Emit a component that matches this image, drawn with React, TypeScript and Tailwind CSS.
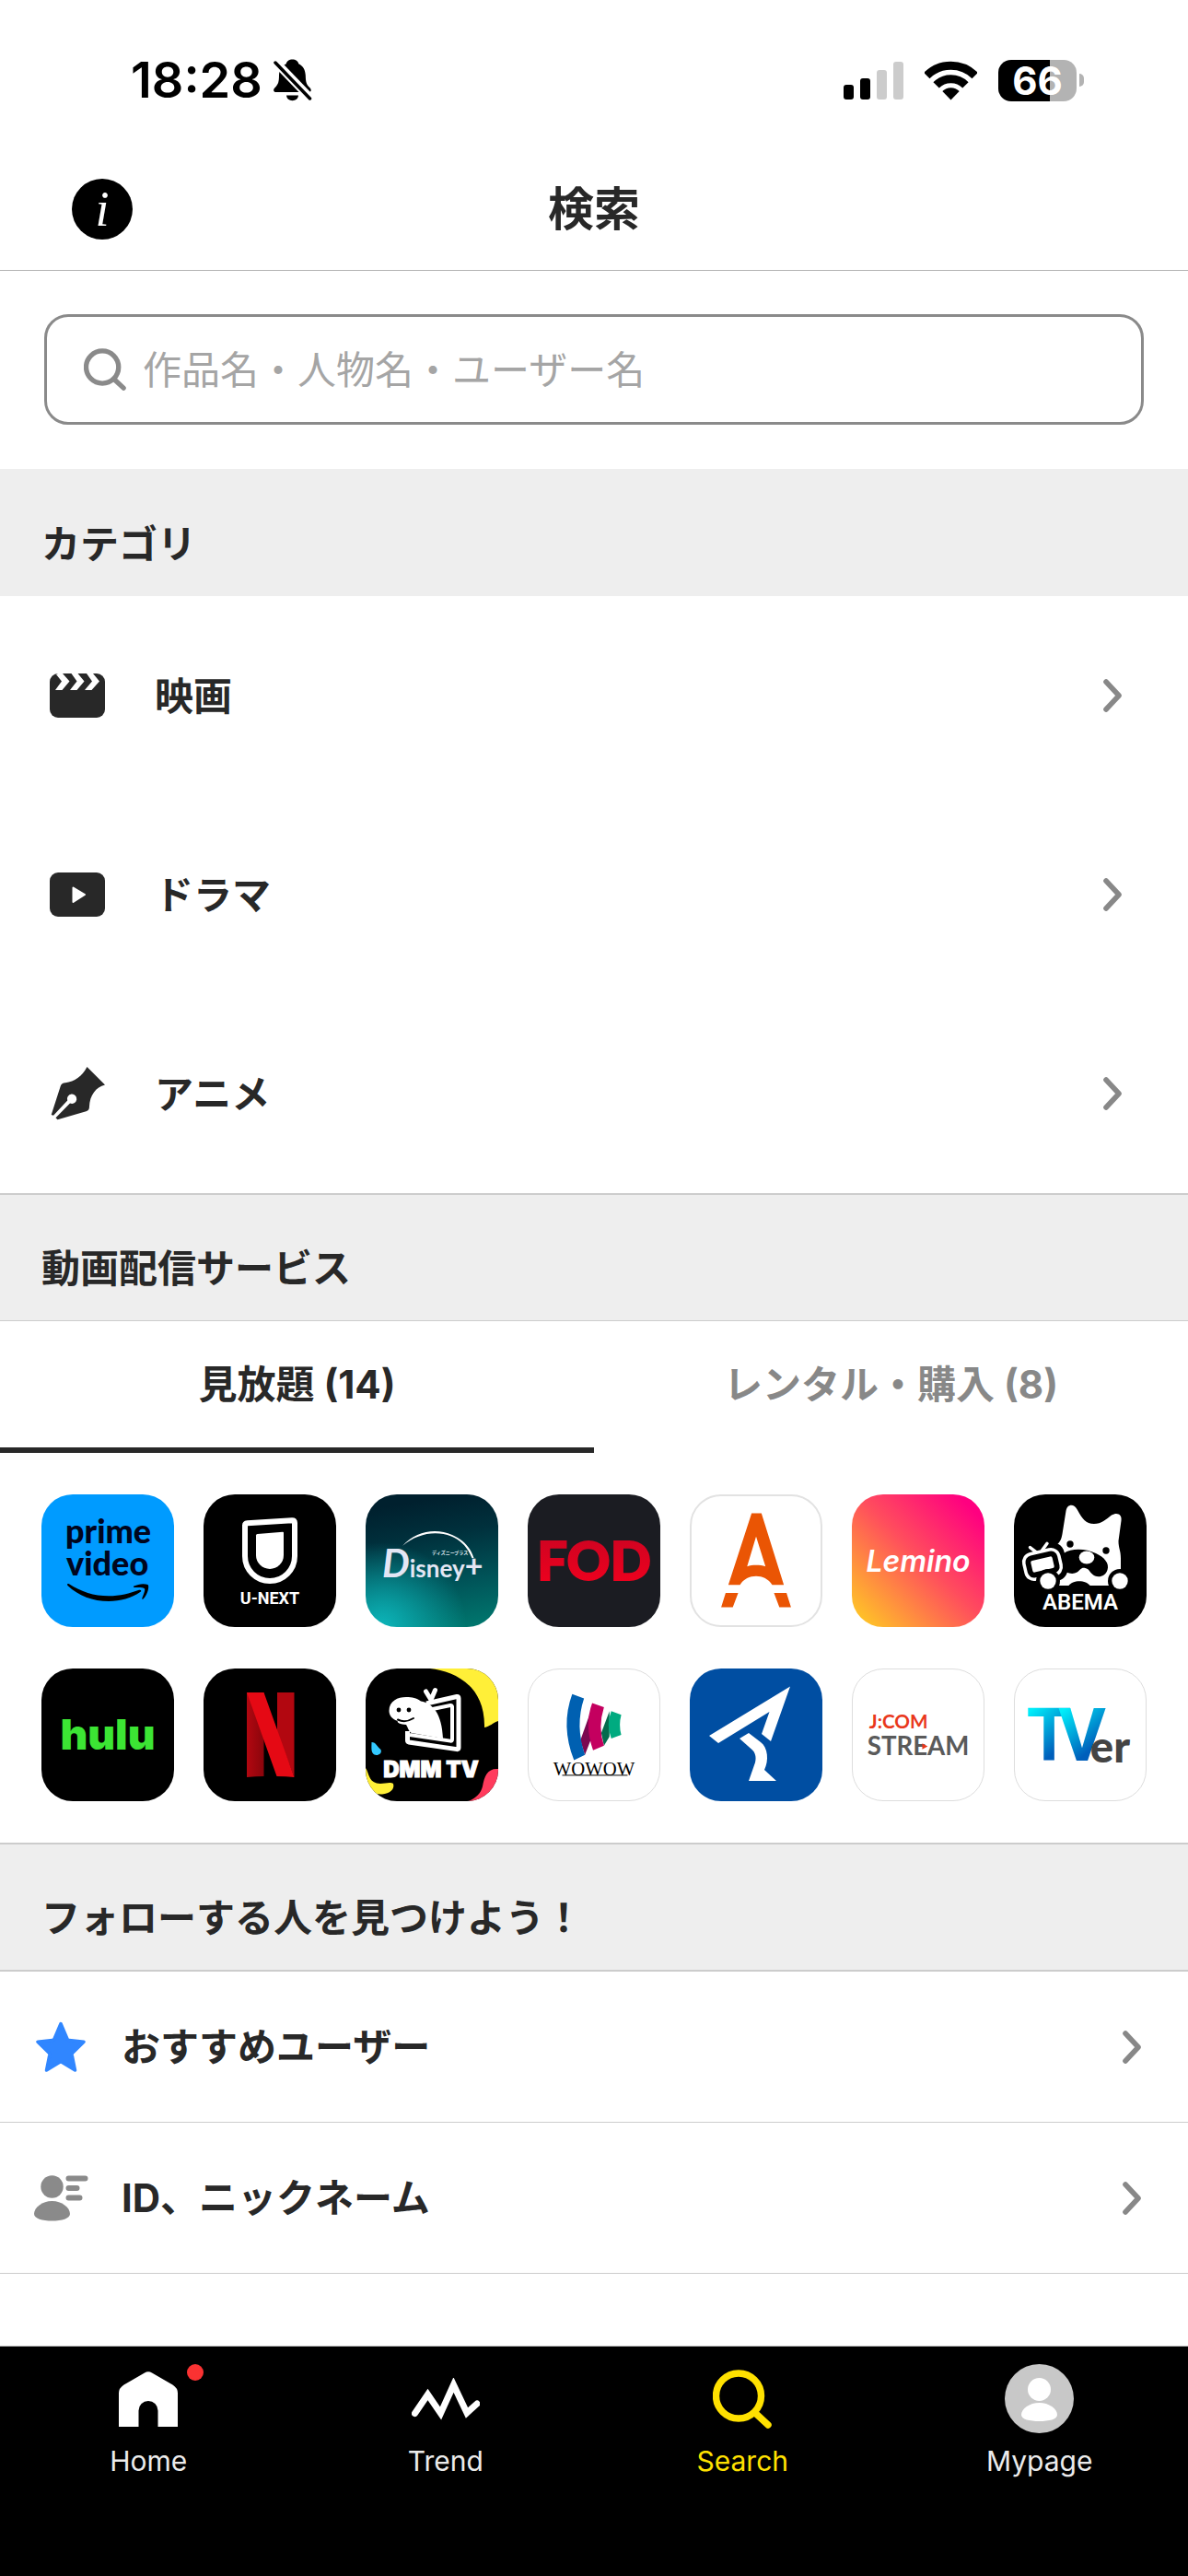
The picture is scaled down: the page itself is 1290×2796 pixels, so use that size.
import { useState } from "react";
import type { ReactNode } from "react";

interface RowProps {
  icon: ReactNode;
  label: string;
}

interface Service {
  name: string;
  tile: string;
  art: ReactNode;
}

function SearchIcon({ className }: { className: string }) {
  return (
    <svg viewBox="0 0 64 64" className={className} fill="none" stroke="currentColor">
      <circle cx="28" cy="28.5" r="24.5" strokeWidth="7.4" />
      <path d="M46 47l14 13" strokeWidth="7.4" strokeLinecap="round" />
    </svg>
  );
}

function Chevron() {
  return (
    <svg viewBox="0 0 22 36" className="h-9 w-[22px] shrink-0" fill="none" stroke="#888" strokeWidth="5.6">
      <path d="M4 3l14 15L4 33" strokeLinecap="round" strokeLinejoin="round" />
    </svg>
  );
}

function StatusBar() {
  return (
    <div className="flex h-[174px] items-center justify-between pr-[113px] pl-[142px] text-black">
      <div className="flex items-center gap-3">
        <span className="text-[54px] leading-[66px] font-semibold">18:28</span>
        <svg viewBox="0 0 42 46" className="h-[46px] w-[42px]">
          <path d="M20.500.5c3.500 0 6.200 2 6.800 4.700 5 2.300 7.300 7 7.500 12.800.2 7 .8 9.500 4.400 13 2.600 2.700 1.700 5-1.200 5H3c-3 0-4-2.400-1.300-5 3.600-3.700 4.200-6.200 4.300-13 .2-6 2.700-10.500 7.800-12.800C14.300 2.500 17 .5 20.500.5z" />
          <path d="M14 39.500h13c-.4 3.600-3 5.700-6.500 5.700S14.400 43.100 14 39.500z" />
          <path d="M2 3l38.500 40" stroke="#fff" strokeWidth="9" />
          <path d="M2 4l37.500 39" stroke="#000" strokeWidth="3.500" strokeLinecap="round" />
        </svg>
      </div>
      <div className="flex items-center gap-[23px]">
        <svg viewBox="0 0 65 42" className="h-[42px] w-[65px]">
          <rect y="26" width="11" height="16" rx="3" />
          <rect x="18" y="19" width="11" height="23" rx="3" />
          <rect x="36" y="10" width="11" height="32" rx="3" fill="#ccc" />
          <rect x="54" y="1" width="11" height="41" rx="3" fill="#ccc" />
        </svg>
        <svg viewBox="0 0 57 43" className="h-[43px] w-[57px]" fill="none" stroke="#000" strokeWidth="9">
          <path d="M2.300 16.100a37 37 0 0 1 52.400 0" />
          <path d="M12.600 26.400a22.500 22.500 0 0 1 31.800 0" />
          <path d="M28.500 42.500l-9.200-9.500a13 13 0 0 1 18.400 0z" fill="#000" stroke="none" />
        </svg>
        <div className="flex items-center gap-[3px]">
          <div className="flex h-[45px] w-[85px] items-center justify-center rounded-[14px] bg-[linear-gradient(90deg,#000_66%,#b3b3b3_66%)]">
            <span className="text-[42px] leading-[45px] font-bold text-white">66</span>
          </div>
          <div className="h-[14px] w-[5px] rounded-r-full bg-[#b3b3b3]" />
        </div>
      </div>
    </div>
  );
}

function SectionTitle({ children, line = "border-[#ccc]" }: { children: ReactNode; line?: string }) {
  return (
    <div className={`border-t-2 bg-[#eee] px-[45px] pt-12 pb-[25px] ${line}`}>
      <h2 className="text-[42px] leading-[63px] font-bold">{children}</h2>
    </div>
  );
}

function CategoryRow({ icon, label }: RowProps) {
  return (
    <a href="#" className="flex h-[216px] items-center pr-[71px] pl-[54px]">
      <span className="w-[60px]">{icon}</span>
      <span className="ml-[54px] grow text-[42px] leading-[63px] font-bold">{label}</span>
      <Chevron />
    </a>
  );
}

function FollowRow({ icon, label }: RowProps) {
  return (
    <a href="#" className="flex h-[164px] items-center border-b border-[#ccc] pr-[50px] pl-9">
      <span className="flex w-[60px] justify-center">{icon}</span>
      <span className="ml-9 grow text-[42px] leading-[63px] font-bold">{label}</span>
      <Chevron />
    </a>
  );
}

const categories: RowProps[] = [
  {
    label: "映画",
    icon: (
      <svg viewBox="0 0 60 48" className="h-12 w-[60px]">
        <rect width="60" height="48" rx="9" fill="#282828" />
        <path
          d="M7 1l6 7.500L6 18h7.500l8-9.500L14 0H9zM22 18h7.500l8-9.500L30.500 0h-7L29.500 8.500zM38 18h7.500l8.500-9.500L47 0h-7l6 8.500z"
          fill="#fff"
        />
      </svg>
    ),
  },
  {
    label: "ドラマ",
    icon: (
      <svg viewBox="0 0 60 48" className="h-12 w-[60px]">
        <rect width="60" height="48" rx="9" fill="#282828" />
        <path d="M25.500 16.500l12.500 7.500-12.500 8z" fill="#fff" stroke="#fff" strokeWidth="2" strokeLinejoin="round" />
      </svg>
    ),
  },
  {
    label: "アニメ",
    icon: (
      <svg viewBox="0 0 60 60" className="h-[60px] w-[60px]">
        <path
          d="M40.500 1L60 20.500C50 23 43.500 32 43 44c0 3-1 4.500-3.500 5.200L8.500 58.300l-2-2L22 40.500a5.200 5.200 0 1 0-2.800-3L4 53.700 1.700 53l10-31c1-2.700 2.300-3.600 5.300-3.800C27 17 35 11.500 40.500 1z"
          fill="#282828"
        />
      </svg>
    ),
  },
];

const services: Service[] = [
  {
    name: "prime video",
    tile: "bg-[#009bff]",
    art: (
      <>
        <g className="font-['Lato']" fontSize="36" fontWeight="900" fill="#00051d">
          <text x="26" y="53">prime</text>
          <text x="27" y="88">video</text>
        </g>
        <path d="M28 98c0-1 1-1.500 2-.7 13 8.500 27 13 43 13 12 0 23-2.700 33-6.500 2-.7 3 1 1.600 2-10 7-22 10.200-34.600 10.200-17 0-33-6-44.500-17z" />
        <path d="M100.500 101c-.8-.3-.7-1 0-1.400 4.500-2.500 11-3.200 15-1.600 1.800.8.400 10.500-5 15.500-.8.700-1.500.3-1.200-.7 1.500-3.800 3.500-8.800 2.800-10.300-1-1.800-6.800-1.700-11.600-1.500z" />
      </>
    ),
  },
  {
    name: "U-NEXT",
    tile: "bg-black",
    art: (
      <>
        <path d="M47.500 31.300L96 28.200q3-.2 3 2.800v36a27 27 0 0 1-54 0V34q0-2.500 2.500-2.700z" fill="none" stroke="#fff" strokeWidth="6" />
        <path d="M58.500 43L86 40.800q1 0 1 1V66a15 15 0 0 1-30 0V44.500q0-1.300 1.500-1.500z" fill="#fff" />
        <text x="72" y="119" textAnchor="middle" className="font-['Roboto']" fontSize="18" fontWeight="700" fill="#fff">U-NEXT</text>
      </>
    ),
  },
  {
    name: "Disney+",
    tile: "bg-[radial-gradient(circle_at_12%_100%,#0cb5ba_0%,transparent_48%),linear-gradient(170deg,#00202e_10%,#00313d_35%,#005358_66%,#007a70_100%)]",
    art: (
      <>
        <path d="M40 56C54 40 76 36 94 44c12 5 20 14 23.500 25l-2 .2C111 58 104 50 93 45.500 76 39 56 42.500 40 56z" fill="#fff" />
        <text x="72" y="65" className="font-['Noto_Sans_CJK_JP']" fontSize="5" fontWeight="700" fill="#dfe8f0">ディズニープラス</text>
        <text y="90" className="font-['Lato']" fontWeight="700" fill="#e4e6f4">
          <tspan x="18" fontSize="42" fontStyle="italic">D</tspan>
          <tspan fontSize="26">isney</tspan>
          <tspan fontSize="34">+</tspan>
        </text>
      </>
    ),
  },
  {
    name: "FOD",
    tile: "bg-[#1b1c22]",
    art: (
      <>
        <linearGradient id="fod" x2="0" y2="1">
          <stop stopColor="#c90422" />
          <stop offset="1" stopColor="#f2001d" />
        </linearGradient>
        <text x="72" y="93" textAnchor="middle" className="font-['Lato']" fontSize="58" fontWeight="900" fill="url(#fod)" stroke="url(#fod)" strokeWidth="2">FOD</text>
      </>
    ),
  },
  {
    name: "A",
    tile: "bg-white border-2 border-[#e2e2e2]",
    art: (
      <g fill="#ea5504">
        <path fillRule="evenodd" d="M67 19h11l25 80H90c-8-13-28-13-36 0H41zM72 45L62 78.500c6-2 14-2 20.500 0z" />
        <path d="M38 108h14l-6 16H33zM92 108h14l5 16H98z" />
      </g>
    ),
  },
  {
    name: "Lemino",
    tile: "bg-[linear-gradient(45deg,#ffc526_5%,#ff4d5d_52%,#ff0080_90%)]",
    art: (
      <text x="72" y="84" textAnchor="middle" className="font-['Inter']" fontSize="32" fontWeight="600" fontStyle="italic" fill="#fff">Lemino</text>
    ),
  },
  {
    name: "ABEMA",
    tile: "bg-black",
    art: (
      <>
        <path d="M45 99V56c5-4 6.500-7 7.500-13l4-25c1.500-8 9-8 12.500-1 5 9 9 15 18 15 8 0 13-5 19-9.500 6-3.500 11.500-1 10.500 6l-3 22c0 8 2.500 10 2.500 19v29.500z" fill="#fff" />
        <circle cx="61" cy="54" r="3.700" />
        <circle cx="100" cy="61" r="3.700" />
        <path d="M54 64c9-6 24-5 35 0 9 4 15 11 12.500 18-2.500 8-12 9.500-17 4-3-3-3-5-7-6-5-1-5 2-9 4.500-5 3-13 1-16.500-5z" />
        <ellipse cx="79" cy="68.500" rx="8.300" ry="7" fill="#fff" />
        <path d="M59 99.500c5-7 19-7 24 0z" />
        <g transform="rotate(-13 31 76)">
          <rect x="5" y="55" width="52" height="42" rx="13" />
          <rect x="11.500" y="62" width="39" height="28" rx="9" fill="none" stroke="#fff" strokeWidth="3.500" />
          <rect x="19" y="69.500" width="24" height="13" rx="2" fill="#fff" />
          <path d="M27 61l-5-6M34 61l7-6" stroke="#fff" strokeWidth="3.500" strokeLinecap="round" />
        </g>
        <circle cx="37" cy="94" r="13" />
        <circle cx="37" cy="94" r="8.700" fill="#fff" />
        <circle cx="115" cy="94" r="13" />
        <circle cx="115" cy="94" r="8.700" fill="#fff" />
        <text x="72" y="125" textAnchor="middle" className="font-['Roboto']" fontSize="24" fontWeight="600" fill="#fff">ABEMA</text>
      </>
    ),
  },
  {
    name: "hulu",
    tile: "bg-black",
    art: (
      <text x="72" y="88" textAnchor="middle" className="font-['Inter']" fontSize="46" fontWeight="900" fill="#3ce534">hulu</text>
    ),
  },
  {
    name: "Netflix",
    tile: "bg-black",
    art: (
      <>
        <linearGradient id="ribbon" x2="1" y2="0">
          <stop stopColor="#b20710" />
          <stop offset="1" stopColor="#8a050c" />
        </linearGradient>
        <path d="M47 26h18.500v91q-9 .2-18.500 1z" fill="url(#ribbon)" />
        <path d="M80 26h18.500v92L80 70z" fill="#b20710" />
        <path d="M47 26h18.500l33 92q-9-1-19-1z" fill="#e50914" />
      </>
    ),
  },
  {
    name: "DMM TV",
    tile: "bg-black",
    art: (
      <>
        <path d="M70 0c26 3 60 18 59 64 6-1 9-5 15-7V0z" fill="#ffef38" />
        <path d="M0 108c4 6 3 14 12 16.500 7 1.500 14-2 18 .5 2 6-4 11-12 11.500C10 137 5 133 0 130z" fill="#ffef38" />
        <path d="M112 144c8-4 13-8 15-16 2-12 6-20 17-19v35z" fill="#ff3b5c" />
        <path d="M6.500 80c5 0 6 5 10 8 2 5-4 7-7 5.500-4-2-3-8-3-13.500z" fill="#33c9ff" />
        <path d="M66 38l33-7.500q2-.5 2 2V86q0 2-2 1.600L47 80q-1.500-.5-1.500-2V68" fill="none" stroke="#fff" strokeWidth="5" />
        <path d="M68 45l24-5q2-.3 2 1.500V77q0 2-2 1.600L48 72" fill="none" stroke="#fff" strokeWidth="4" />
        <path d="M25.500 46C25.500 35 35 31 44 31c7 0 11 1 16 4.500C73 38 83 49 84 76l-34-6c-3-1-4-6-6-9-6 0-11-3-9-4-6-2-9.500-6-9.500-11z" fill="#fff" />
        <path d="M35 55.500c7 3.500 12 1.500 17-1.500" fill="none" stroke="#000" strokeWidth="2" strokeLinecap="round" />
        <circle cx="36" cy="45" r="2.400" />
        <circle cx="47" cy="45" r="2.400" />
        <path d="M71 34l-5.500-9M71 34l4.500-10.500" stroke="#fff" strokeWidth="5" strokeLinecap="round" />
        <text x="71" y="118" textAnchor="middle" className="font-['Inter']" fontSize="24" fontWeight="900" fill="#fff" stroke="#fff">DMM TV</text>
      </>
    ),
  },
  {
    name: "WOWOW",
    tile: "bg-white border border-[#ddd]",
    art: (
      <>
        <path d="M62 94l-5-16 10-28 2 26z" fill="#7b0850" />
        <path d="M83 84l-3-14 9-24v28z" fill="#046b4d" />
        <path d="M48 27l13 5q-10 30 1 62l-12 6q-15-38-2-73z" fill="#0060b1" />
        <path d="M70 37l13 4.500q-7 22 0 42.500l-12 5q-10-28-1-52z" fill="#c4005f" />
        <path d="M91 46l11 4q-3 11 0 22l-11 4q-6-15 0-30z" fill="#00ab80" />
        <text x="72" y="117" textAnchor="middle" className="font-['Liberation_Serif']" fontSize="21">WOWOW</text>
        <path d="M37 116.500h72" stroke="#000" />
      </>
    ),
  },
  {
    name: "SKY",
    tile: "bg-[#004ea2]",
    art: (
      <path
        d="M109 19.500L88 79l-10-8 8.500-24L31 81l-10-8zM64 70l13 10c8 6 9 20 4 30l13 12H64l7-20c1.500-6 0-11-3.500-14L54 76z"
        fill="#fff"
      />
    ),
  },
  {
    name: "J:COM STREAM",
    tile: "bg-white border border-[#ddd]",
    art: (
      <g className="font-['Lato']" fontWeight="700">
        <text x="18" y="65" fontSize="21" fill="#e9381c">J:COM</text>
        <text x="16" y="94" fontSize="28" fill="#5a5a5a">STREAM</text>
        <path d="M76.500 81.500l6 3.300-6 3.200z" fill="#e9381c" />
      </g>
    ),
  },
  {
    name: "TVer",
    tile: "bg-white border border-[#ddd]",
    art: (
      <>
        <linearGradient id="tver" x2=".5" y2="1">
          <stop offset=".2" stopColor="#00eefa" />
          <stop offset=".8" stopColor="#005fbb" />
        </linearGradient>
        <g className="font-['Roboto']" fontSize="80" fontWeight="700" fill="url(#tver)">
          <text x="13" y="100">T</text>
          <text x="48" y="100">V</text>
        </g>
        <text x="83" y="102" className="font-['Lato']" fontSize="48" fontWeight="900" fill="#444">er</text>
      </>
    ),
  },
];

const followRows: RowProps[] = [
  {
    label: "おすすめユーザー",
    icon: (
      <svg viewBox="0 0 54 55" className="h-[55px] w-[54px]">
        <path
          d="M27 2.500l7 16.500q.6 1.500 2.200 1.600L52 22.200 40 34q-1 1-.8 2.500L42.500 53 28.500 44.500q-1.500-.8-3 0L11.500 53l3.300-16.500Q15 35 14 34L2 22.200l15.800-1.600q1.600-.1 2.200-1.600z"
          fill="#3086ff"
          stroke="#3086ff"
          strokeWidth="3.500"
          strokeLinejoin="round"
        />
      </svg>
    ),
  },
  {
    label: "ID、ニックネーム",
    icon: (
      <svg viewBox="0 0 60 50" className="h-[50px] w-[60px]" fill="#8a8a8a">
        <circle cx="20.500" cy="12.500" r="12.200" />
        <path d="M20.500 28C31 28 40 35 40 42c0 5-9 7.500-19.500 7.500S1 47 1 42c0-7 9-14 19.500-14z" />
        <path d="M38.500 3.500h18M38.500 14h9M38.500 24.500h12" stroke="#8a8a8a" strokeWidth="6" strokeLinecap="round" />
      </svg>
    ),
  },
];

const navItems: RowProps[] = [
  {
    label: "Home",
    icon: (
      <svg viewBox="0 0 64 60" className="h-[60px] w-16">
        <path d="M28 1.500q4-2.500 8 0l22.500 13q5.500 3.500 5.500 9V60H42.500V42.500a10.500 10.500 0 0 0-21 0V60H0V23.500q0-5.500 5.500-9z" fill="#fff" />
      </svg>
    ),
  },
  {
    label: "Trend",
    icon: (
      <svg viewBox="0 0 74 46" className="h-[46px] w-[74px]" fill="none" stroke="#fff" strokeWidth="7">
        <path d="M3.500 38.500L17.500 18 31.500 38.500 45.500 7.500 60 38 71 28" strokeLinecap="round" strokeMiterlimit="10" />
      </svg>
    ),
  },
  { label: "Search", icon: <SearchIcon className="h-16 w-16" /> },
  {
    label: "Mypage",
    icon: (
      <svg viewBox="0 0 75 75" className="h-[75px] w-[75px]">
        <circle cx="37.500" cy="37.500" r="37.500" fill="#c8c8c8" />
        <circle cx="37.500" cy="27.500" r="12.500" fill="#fff" />
        <path d="M37.500 42C48 42 57 48.500 57 55c0 5-9 7-19.500 7S18 60 18 55c0-6.500 9-13 19.500-13z" fill="#fff" />
      </svg>
    ),
  },
];

const tabs = ["見放題 (14)", "レンタル・購入 (8)"];

export default function App() {
  const [tab, setTab] = useState(0);

  return (
    <div className="flex min-h-screen flex-col bg-white font-['Inter','Noto_Sans_CJK_JP',sans-serif] text-[#282828]">
      <header className="border-b border-[#b3b3b3]">
        <StatusBar />
        <div className="grid h-[119px] grid-cols-[1fr_auto_1fr] items-center px-[78px] pb-[13px]">
          <button
            type="button"
            aria-label="info"
            className="flex h-[66px] w-[66px] items-center justify-center rounded-full bg-black font-['Liberation_Serif',serif] text-[54px] leading-[66px] text-white italic"
          >
            i
          </button>
          <h1 className="text-[50px] leading-[66px] font-bold">検索</h1>
        </div>
      </header>

      <main>
        {/* Search box */}
        <div className="p-12 pt-[47px]">
          <label className="flex h-[120px] items-center gap-[18px] rounded-[26px] border-3 border-[#8a8a8a] px-10">
            <SearchIcon className="h-[46px] w-[46px] shrink-0 text-[#8a8a8a]" />
            <input
              type="search"
              aria-label="search"
              placeholder="作品名・人物名・ユーザー名"
              className="h-[63px] grow text-[42px] outline-none placeholder:text-[#a5a5a5]"
            />
          </label>
        </div>

        {/* Categories */}
        <section>
          <SectionTitle line="border-[#eee]">カテゴリ</SectionTitle>
          {categories.map((category) => (
            <CategoryRow key={category.label} {...category} />
          ))}
        </section>

        {/* Streaming services */}
        <section>
          <SectionTitle>動画配信サービス</SectionTitle>
          <div role="tablist" className="grid grid-cols-2 border-t border-[#ccc]">
            {tabs.map((label, index) => (
              <button
                key={label}
                type="button"
                role="tab"
                aria-selected={tab === index}
                onClick={() => setTab(index)}
                className={`h-[143px] border-b-6 text-[42px] leading-[63px] font-bold ${
                  tab === index ? "border-[#282828]" : "border-transparent text-[#888]"
                }`}
              >
                {label}
              </button>
            ))}
          </div>
          <div className="grid grid-cols-[repeat(7,144px)] justify-between gap-y-[45px] p-[45px]">
            {services.map((service) => (
              <a
                key={service.name}
                href="#"
                aria-label={service.name}
                className={`h-36 w-36 overflow-hidden rounded-[34px] ${service.tile}`}
              >
                <svg viewBox="0 0 144 144" className="h-full w-full">
                  {service.art}
                </svg>
              </a>
            ))}
          </div>
        </section>

        {/* Find people */}
        <section>
          <SectionTitle>フォローする人を見つけよう！</SectionTitle>
          <div className="border-t-2 border-[#ccc]">
            {followRows.map((row) => (
              <FollowRow key={row.label} {...row} />
            ))}
          </div>
        </section>
      </main>

      <nav className="mt-auto grid h-[250px] grid-cols-4 border-t border-[#b3b3b3] bg-black pt-[19px]">
        {navItems.map((item) => (
          <a
            key={item.label}
            href="#"
            className={`flex flex-col items-center gap-2 ${item.label === "Search" ? "text-[#ffe100]" : "text-[#ebebeb]"}`}
          >
            <span className="relative flex h-[75px] items-center">
              {item.icon}
              {item.label === "Home" && (
                <span className="absolute top-0 -right-7 h-[18px] w-[18px] rounded-full bg-[#fa3232]" />
              )}
            </span>
            <span className="text-[30px] leading-[44px]">{item.label}</span>
          </a>
        ))}
      </nav>
    </div>
  );
}
